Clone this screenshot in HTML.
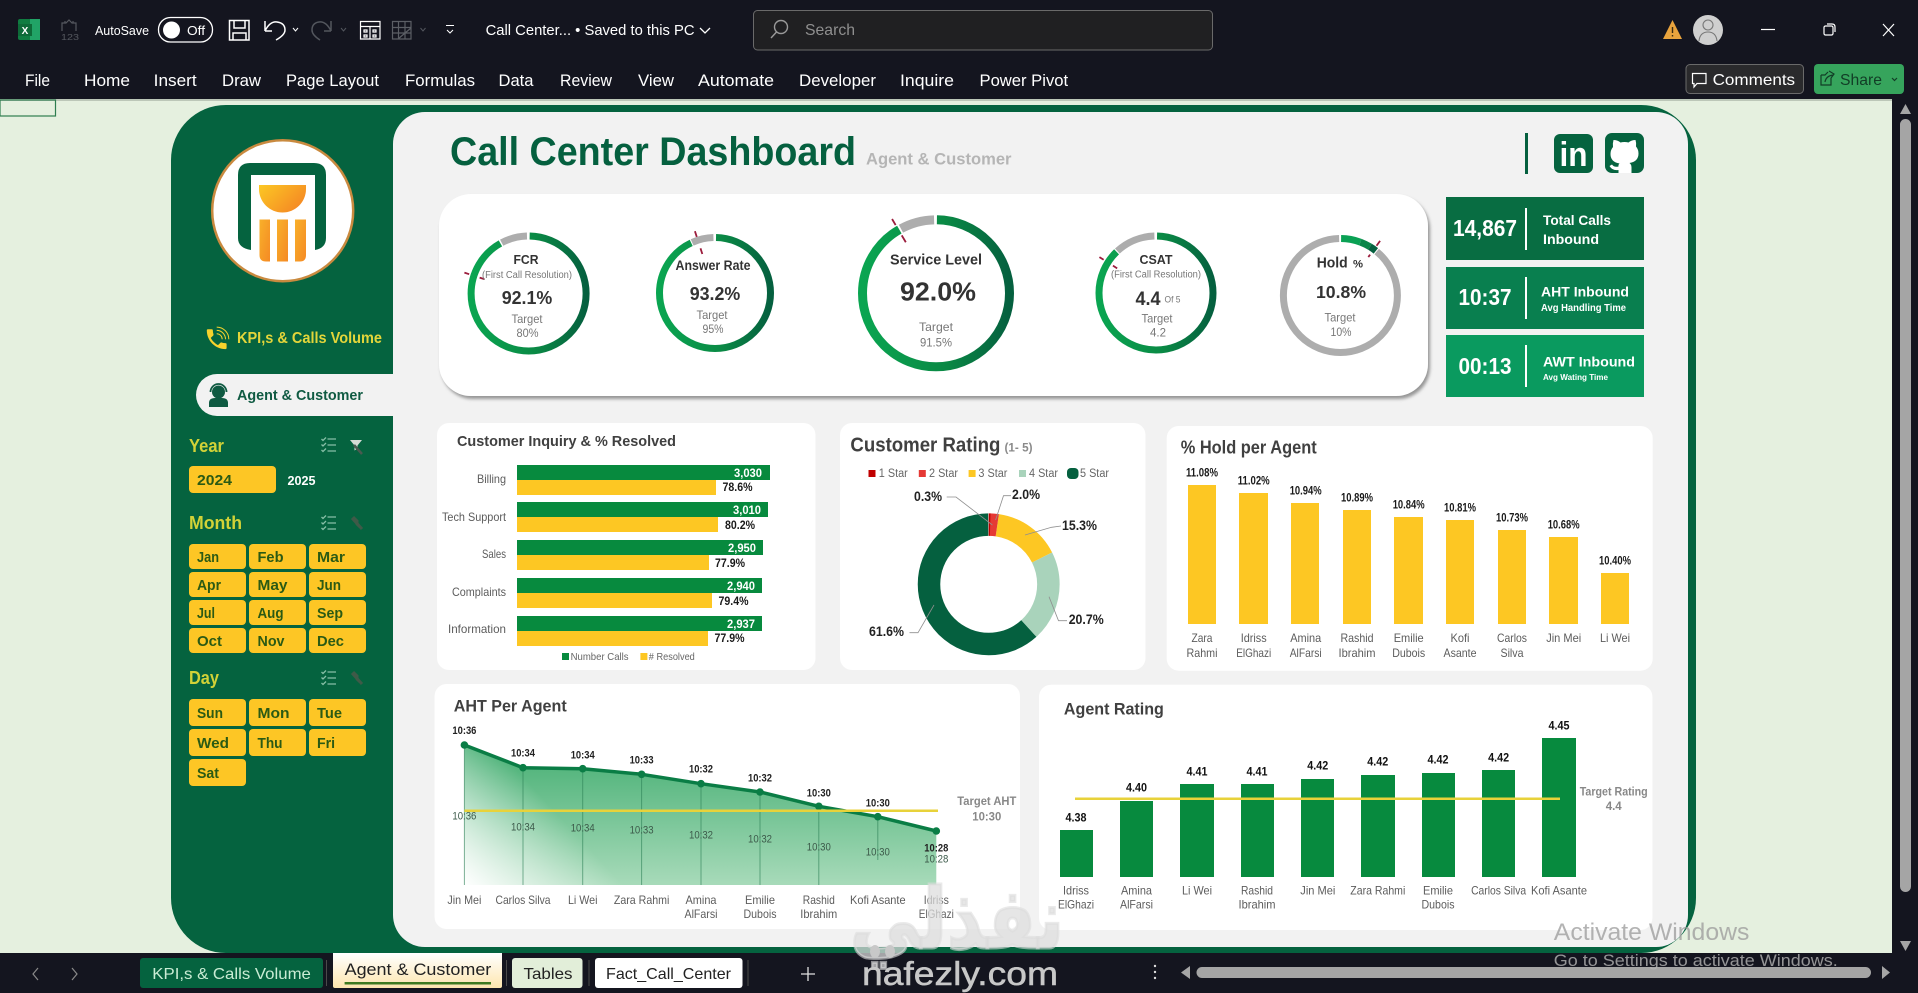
<!DOCTYPE html>
<html lang="en"><head><meta charset="utf-8"><title>Call Center Dashboard</title>
<style>
html,body{margin:0;padding:0;background:#14151f;width:1918px;height:993px;overflow:hidden}
svg{display:block;position:absolute;left:0;top:0}
text{font-family:"Liberation Sans",sans-serif}
.m{fill:#fff;font-size:16px}
.b{font-weight:700}
.ti{fill:#404040;font-weight:700}
.mb{font-weight:700;font-size:15px;fill:#2b5a14}
.sh{font-weight:700;font-size:18px;fill:#d2d237}
.dk{fill:#333;font-weight:700}
.gy{fill:#777;font-size:12px}
.w{fill:#fff;font-weight:700}
.c{fill:#5c5c5c;font-size:12px}
.v{fill:#1a1a1a;font-size:12px;font-weight:700}
.tc{fill:#888;font-size:12px;font-weight:700}
.l{fill:none;stroke:#8f8f8f;stroke-width:.8}
</style></head><body>
<svg width="1918" height="993" viewBox="0 0 1918 993" xmlns="http://www.w3.org/2000/svg">
<defs>
<linearGradient id="rg" x1="0" y1="0" x2="0" y2="1"><stop offset="0" stop-color="#0aa551"/><stop offset=".55" stop-color="#0a8a45"/><stop offset="1" stop-color="#05603f"/></linearGradient>
<linearGradient id="og" x1="0" y1="0" x2="1" y2=".6"><stop offset="0" stop-color="#fcc824"/><stop offset="1" stop-color="#f58a24"/></linearGradient>
<linearGradient id="ob" x1="0" y1="0" x2="1" y2="1"><stop offset="0" stop-color="#f8b02a"/><stop offset="1" stop-color="#f58a24"/></linearGradient>
<linearGradient id="ar" x1="0" y1="0" x2="0" y2="1"><stop offset="0" stop-color="#42ad70"/><stop offset="1" stop-color="#abdcbc"/></linearGradient>
<linearGradient id="aw" gradientUnits="userSpaceOnUse" x1="464" y1="885" x2="620" y2="740"><stop offset="0" stop-color="#fff" stop-opacity="1"/><stop offset=".55" stop-color="#fff" stop-opacity="0"/></linearGradient>
<linearGradient id="tb" x1="0" y1="0" x2="0" y2="1"><stop offset="0" stop-color="#fff"/><stop offset="1" stop-color="#fde6ae"/></linearGradient>
<filter id="sd" x="-3%" y="-5%" width="106%" height="112%"><feDropShadow dx="2" dy="3" stdDeviation="1.500" flood-color="#777" flood-opacity=".75"/></filter>
<clipPath id="area"><path d="M464.400 745L523 767.700 582.700 768.700 641.600 774.300 701 783.700 760 792 818.800 806.300 877.800 816.700 936.300 831V885H464.400Z"/></clipPath>
</defs>

<!-- sheet -->
<rect x="0" y="99" width="1892" height="854" fill="#e5f0df"/>
<rect x="0" y="99" width="1918" height="2" fill="#bcc7b8"/>
<rect x="0" y="100" width="55.500" height="16" fill="none" stroke="#2e7d4f" stroke-width="1.200"/>
<rect x="171" y="105" width="1525" height="848" rx="55" fill="#05633f"/>
<rect x="393" y="112" width="1295" height="835" rx="32" fill="#f2f2f2"/>

<!-- logo -->
<circle cx="282.700" cy="210.700" r="70.500" fill="#fff" stroke="#c98a3f" stroke-width="2.500"/>
<path d="M238 250V175Q238 163 250 163H314Q326 163 326 175V238Q326 248 315 250V175H251V250Q238 248 238 238Z" fill="#05633f"/>
<path d="M259 185H306V189A23.500 23.500 0 0 1 259 189Z" fill="url(#og)"/>
<path d="M259.500 219.500H270V261.500H266Q259.500 261.500 259.500 255Z" fill="url(#ob)"/>
<rect x="277" y="219.500" width="11" height="42" fill="url(#ob)"/>
<path d="M295 219.500H306V255Q306 261.500 300 261.500H295Z" fill="url(#ob)"/>

<!-- nav -->
<g transform="translate(203.500 326) scale(1.100)"><path d="M6.600 10.800c1.400 2.800 3.800 5.100 6.600 6.600l2.200-2.200c.3-.3.7-.4 1-.2 1.100.4 2.300.6 3.600.6.600 0 1 .4 1 1V20c0 .6-.4 1-1 1C10.600 21 3 13.400 3 4c0-.6.4-1 1-1h3.500c.6 0 1 .4 1 1 0 1.300.2 2.500.6 3.600.1.300 0 .7-.2 1z" fill="#f6d32d"/><path d="M12 7a5 5 0 0 1 5 5M12 4a8 8 0 0 1 8 8M12 1a11 11 0 0 1 11 11" fill="none" stroke="#f6d32d" stroke-width=".9"/></g>
<text x="237" y="343" class="b" font-size="15.500" fill="#e3d53a" textLength="145" lengthAdjust="spacingAndGlyphs">KPI,s &amp; Calls Volume</text>
<path d="M393 374H217A21 21 0 0 0 217 416H393Z" fill="#f2f2f2"/>
<g fill="#0f5a42"><circle cx="218.500" cy="392" r="6.500"/><path d="M209 407v-4q0-5 6-5h7q6 0 6 5v4q0 0-2 0h-15q-2 0-2 0z"/><path d="M210.500 392a8 8 0 0 1 16 0" fill="none" stroke="#0f5a42" stroke-width="1.800"/></g>
<text x="237" y="400" class="b" font-size="14.500" fill="#0f5a42" textLength="126" lengthAdjust="spacingAndGlyphs">Agent &amp; Customer</text>

<!-- slicers -->
<text x="189" y="452" class="sh" textLength="35" lengthAdjust="spacingAndGlyphs">Year</text>
<text x="189" y="529" class="sh" textLength="53" lengthAdjust="spacingAndGlyphs">Month</text>
<text x="189" y="684" class="sh" textLength="30" lengthAdjust="spacingAndGlyphs">Day</text>
<g fill="none" stroke="#86bfa6" stroke-width="1.300">
<path d="M321.500 439l1.500 1.500 3-3M321.500 444.500l1.500 1.500 3-3M321.500 450l1.500 1.500 3-3M327.500 439H336M327.500 445H336M327.500 451H336"/>
<path d="M321.500 517l1.500 1.500 3-3M321.500 522.500l1.500 1.500 3-3M321.500 528l1.500 1.500 3-3M327.500 517H336M327.500 523H336M327.500 529H336"/>
<path d="M321.500 672l1.500 1.500 3-3M321.500 677.500l1.500 1.500 3-3M321.500 683l1.500 1.500 3-3M327.500 672H336M327.500 678H336M327.500 684H336"/>
</g>
<path d="M350 440h12l-4.500 5.500v3l-3 2v-5Z" fill="#d5dcd6"/><path d="M354 445l8 9" stroke="#4a5a50" stroke-width="2.500"/>
<path d="M352 518l10 11M353 517l4 4v3l3 3" stroke="#3f5a48" stroke-width="3" fill="none"/>
<path d="M352 673l10 11M353 672l4 4v3l3 3" stroke="#3f5a48" stroke-width="3" fill="none"/>
<g fill="#fdc625">
<rect x="189" y="466" width="87" height="27" rx="4"/>
<rect x="189" y="544" width="57" height="25" rx="4"/><rect x="249" y="544" width="57" height="25" rx="4"/><rect x="309" y="544" width="57" height="25" rx="4"/>
<rect x="189" y="572" width="57" height="25" rx="4"/><rect x="249" y="572" width="57" height="25" rx="4"/><rect x="309" y="572" width="57" height="25" rx="4"/>
<rect x="189" y="600" width="57" height="25" rx="4"/><rect x="249" y="600" width="57" height="25" rx="4"/><rect x="309" y="600" width="57" height="25" rx="4"/>
<rect x="189" y="628" width="57" height="25" rx="4"/><rect x="249" y="628" width="57" height="25" rx="4"/><rect x="309" y="628" width="57" height="25" rx="4"/>
<rect x="189" y="699" width="57" height="27" rx="4"/><rect x="249" y="699" width="57" height="27" rx="4"/><rect x="309" y="699" width="57" height="27" rx="4"/>
<rect x="189" y="729" width="57" height="27" rx="4"/><rect x="249" y="729" width="57" height="27" rx="4"/><rect x="309" y="729" width="57" height="27" rx="4"/>
<rect x="189" y="759" width="57" height="27" rx="4"/>
</g>
<text x="197" y="485" class="mb" textLength="35" lengthAdjust="spacingAndGlyphs">2024</text>
<text x="287.500" y="485" class="b" font-size="13" fill="#fff" textLength="28" lengthAdjust="spacingAndGlyphs">2025</text>
<g>
<text x="197" y="562" class="mb" textLength="22" lengthAdjust="spacingAndGlyphs">Jan</text><text x="257.500" y="562" class="mb" textLength="26" lengthAdjust="spacingAndGlyphs">Feb</text><text x="317" y="562" class="mb" textLength="28" lengthAdjust="spacingAndGlyphs">Mar</text>
<text x="197" y="590" class="mb" textLength="24" lengthAdjust="spacingAndGlyphs">Apr</text><text x="257.500" y="590" class="mb" textLength="30" lengthAdjust="spacingAndGlyphs">May</text><text x="317" y="590" class="mb" textLength="24" lengthAdjust="spacingAndGlyphs">Jun</text>
<text x="197" y="618" class="mb" textLength="18" lengthAdjust="spacingAndGlyphs">Jul</text><text x="257.500" y="618" class="mb" textLength="26" lengthAdjust="spacingAndGlyphs">Aug</text><text x="317" y="618" class="mb" textLength="26" lengthAdjust="spacingAndGlyphs">Sep</text>
<text x="197" y="646" class="mb" textLength="25" lengthAdjust="spacingAndGlyphs">Oct</text><text x="257.500" y="646" class="mb" textLength="27" lengthAdjust="spacingAndGlyphs">Nov</text><text x="317" y="646" class="mb" textLength="27" lengthAdjust="spacingAndGlyphs">Dec</text>
<text x="197" y="718" class="mb" textLength="26" lengthAdjust="spacingAndGlyphs">Sun</text><text x="257.500" y="718" class="mb" textLength="32" lengthAdjust="spacingAndGlyphs">Mon</text><text x="317" y="718" class="mb" textLength="25" lengthAdjust="spacingAndGlyphs">Tue</text>
<text x="197" y="748" class="mb" textLength="32" lengthAdjust="spacingAndGlyphs">Wed</text><text x="257.500" y="748" class="mb" textLength="25" lengthAdjust="spacingAndGlyphs">Thu</text><text x="317" y="748" class="mb" textLength="18" lengthAdjust="spacingAndGlyphs">Fri</text>
<text x="197" y="778" class="mb" textLength="22" lengthAdjust="spacingAndGlyphs">Sat</text>
</g>

<!-- title -->
<text x="450" y="165" class="b" font-size="40" fill="#05603f" textLength="406" lengthAdjust="spacingAndGlyphs">Call Center Dashboard</text>
<text x="866" y="164.500" class="b" font-size="16.500" fill="#b5b5b5" textLength="145.500" lengthAdjust="spacingAndGlyphs">Agent &amp; Customer</text>
<rect x="1525" y="133" width="3" height="41" fill="#05603f"/>
<rect x="1554" y="134" width="39" height="39" rx="6" fill="#05633f"/>
<text x="1573.500" y="166" text-anchor="middle" class="b" font-size="34" fill="#fff" textLength="28" lengthAdjust="spacingAndGlyphs">in</text>
<rect x="1605" y="133" width="39" height="40" rx="7" fill="#05633f"/>
<path d="M1613.500 140q4 0 7 2.500q4-1 8 0q3-2.500 7-2.500q1 3 .5 6.500q2.500 3 2.500 7q0 8-9 9.500q2 1.500 2 4.500v5.500h-13v-3q-6 1-9-4l2.500-1.500q2 3 6.500 2q-.3-2 1-3q-9-1.500-9-9.500q0-4 2.500-7q-.5-3.500 .5-7z" fill="#fff"/>

<!-- KPI panel -->
<rect x="439" y="194" width="989" height="202" rx="32" fill="#fff" filter="url(#sd)"/>
<g fill="none">
<g stroke-width="7">
<circle cx="528.600" cy="293.500" r="57.500" pathLength="100" stroke="url(#rg)" stroke-dasharray="91.600 100" stroke-dashoffset="-.3" transform="rotate(-90 528.600 293.500)"/>
<circle cx="528.600" cy="293.500" r="57.500" pathLength="100" stroke="#adadad" stroke-dasharray="7.300 100" stroke-dashoffset="-92.300" transform="rotate(-90 528.600 293.500)"/>
<circle cx="715" cy="293" r="55.500" pathLength="100" stroke="url(#rg)" stroke-dasharray="92.700 100" stroke-dashoffset="-.3" transform="rotate(-90 715 293)"/>
<circle cx="715" cy="293" r="55.500" pathLength="100" stroke="#adadad" stroke-dasharray="6.300 100" stroke-dashoffset="-93.300" transform="rotate(-90 715 293)"/>
<circle cx="1156" cy="293" r="57" pathLength="100" stroke="url(#rg)" stroke-dasharray="87.600 100" stroke-dashoffset="-.3" transform="rotate(-90 1156 293)"/>
<circle cx="1156" cy="293" r="57" pathLength="100" stroke="#adadad" stroke-dasharray="11.400 100" stroke-dashoffset="-88.200" transform="rotate(-90 1156 293)"/>
<circle cx="1340.400" cy="295.500" r="57" pathLength="100" stroke="#adadad" stroke-dasharray="88.700 100" stroke-dashoffset="-11" transform="rotate(-90 1340.400 295.500)"/>
<circle cx="1340.400" cy="295.500" r="57" pathLength="100" stroke="#0aa154" stroke-dasharray="5.500 100" stroke-dashoffset="-.2" transform="rotate(-90 1340.400 295.500)"/>
<circle cx="1340.400" cy="295.500" r="57" pathLength="100" stroke="#0a8549" stroke-dasharray="3 100" stroke-dashoffset="-5.700" transform="rotate(-90 1340.400 295.500)"/>
<circle cx="1340.400" cy="295.500" r="57" pathLength="100" stroke="#06603f" stroke-dasharray="2 100" stroke-dashoffset="-8.700" transform="rotate(-90 1340.400 295.500)"/>
</g>
<g stroke-width="9">
<circle cx="936" cy="293.300" r="73.500" pathLength="100" stroke="url(#rg)" stroke-dasharray="91.600 100" stroke-dashoffset="-.2" transform="rotate(-90 936 293.300)"/>
<circle cx="936" cy="293.300" r="73.500" pathLength="100" stroke="#adadad" stroke-dasharray="7.500 100" stroke-dashoffset="-92.200" transform="rotate(-90 936 293.300)"/>
</g>
<g stroke="#9b1c3c" stroke-width="1.800">
<path transform="rotate(-72 528.600 293.500)" d="M528.600 226v5M528.600 242v5"/>
<path transform="rotate(-18 715 293)" d="M715 228v6M715 246v6"/>
<path transform="rotate(-30.600 936 293.300)" d="M936 207v7M936 226v8"/>
<path transform="rotate(-57.600 1156 293)" d="M1156 226v5M1156 242v5"/>
<path transform="rotate(36 1340.400 295.500)" d="M1340.400 228v6M1340.400 245v3"/>
</g>
</g>
<text x="526" y="264" text-anchor="middle" class="dk" font-size="13" textLength="25" lengthAdjust="spacingAndGlyphs">FCR</text>
<text x="527" y="278" text-anchor="middle" fill="#777" font-size="10" textLength="90" lengthAdjust="spacingAndGlyphs">(First Call Resolution)</text>
<text x="527" y="304" text-anchor="middle" class="dk" font-size="18" textLength="50.600" lengthAdjust="spacingAndGlyphs">92.1%</text>
<text x="527" y="323" text-anchor="middle" class="gy" textLength="31" lengthAdjust="spacingAndGlyphs">Target</text>
<text x="527.500" y="337" text-anchor="middle" class="gy" textLength="22" lengthAdjust="spacingAndGlyphs">80%</text>

<text x="713" y="270" text-anchor="middle" class="dk" font-size="13.500" textLength="75" lengthAdjust="spacingAndGlyphs">Answer Rate</text>
<text x="715" y="300" text-anchor="middle" class="dk" font-size="18" textLength="50.600" lengthAdjust="spacingAndGlyphs">93.2%</text>
<text x="712" y="319" text-anchor="middle" class="gy" textLength="31" lengthAdjust="spacingAndGlyphs">Target</text>
<text x="713" y="333" text-anchor="middle" class="gy" textLength="21" lengthAdjust="spacingAndGlyphs">95%</text>

<text x="936" y="264.700" text-anchor="middle" class="dk" font-size="15" textLength="92" lengthAdjust="spacingAndGlyphs">Service Level</text>
<text x="938" y="300.700" text-anchor="middle" class="dk" font-size="26" textLength="76" lengthAdjust="spacingAndGlyphs">92.0%</text>
<text x="936" y="331" text-anchor="middle" class="gy" textLength="34" lengthAdjust="spacingAndGlyphs">Target</text>
<text x="936" y="346.700" text-anchor="middle" class="gy" textLength="32" lengthAdjust="spacingAndGlyphs">91.5%</text>

<text x="1156" y="264" text-anchor="middle" class="dk" font-size="13" textLength="33" lengthAdjust="spacingAndGlyphs">CSAT</text>
<text x="1156" y="277.700" text-anchor="middle" fill="#777" font-size="10" textLength="90" lengthAdjust="spacingAndGlyphs">(First Call Resolution)</text>
<text x="1148" y="305" text-anchor="middle" class="dk" font-size="19" textLength="25" lengthAdjust="spacingAndGlyphs">4.4</text>
<text x="1164.500" y="302.700" fill="#777" font-size="9" textLength="16" lengthAdjust="spacingAndGlyphs">Of 5</text>
<text x="1157" y="322.700" text-anchor="middle" class="gy" textLength="31" lengthAdjust="spacingAndGlyphs">Target</text>
<text x="1158" y="336.700" text-anchor="middle" class="gy" textLength="16" lengthAdjust="spacingAndGlyphs">4.2</text>

<text x="1316.700" y="267.300" class="dk" font-size="14.500" textLength="31" lengthAdjust="spacingAndGlyphs">Hold</text>
<text x="1353" y="267.300" class="dk" font-size="11" textLength="10" lengthAdjust="spacingAndGlyphs">%</text>
<text x="1341" y="298" text-anchor="middle" class="dk" font-size="17.500" textLength="50" lengthAdjust="spacingAndGlyphs">10.8%</text>
<text x="1340" y="321.700" text-anchor="middle" class="gy" textLength="31" lengthAdjust="spacingAndGlyphs">Target</text>
<text x="1341" y="336" text-anchor="middle" class="gy" textLength="21" lengthAdjust="spacingAndGlyphs">10%</text>

<!-- KPI cards -->
<rect x="1446" y="197" width="198" height="63" fill="#086d42"/>
<rect x="1446" y="267" width="198" height="62" fill="#097f4f"/>
<rect x="1446" y="335" width="198" height="62" fill="#0a9a5f"/>
<g fill="#fff"><rect x="1525" y="208" width="2" height="42"/><rect x="1525" y="277" width="2" height="42"/><rect x="1525" y="345" width="2" height="42"/></g>
<text x="1485" y="236" text-anchor="middle" class="w" font-size="23" textLength="64" lengthAdjust="spacingAndGlyphs">14,867</text>
<text x="1485" y="305" text-anchor="middle" class="w" font-size="23" textLength="53" lengthAdjust="spacingAndGlyphs">10:37</text>
<text x="1485" y="374" text-anchor="middle" class="w" font-size="23" textLength="53" lengthAdjust="spacingAndGlyphs">00:13</text>
<text x="1543" y="225" class="w" font-size="14" textLength="68" lengthAdjust="spacingAndGlyphs">Total Calls</text>
<text x="1543" y="244" class="w" font-size="14" textLength="56" lengthAdjust="spacingAndGlyphs">Inbound</text>
<text x="1541" y="296.700" class="w" font-size="14" textLength="88" lengthAdjust="spacingAndGlyphs">AHT Inbound</text>
<text x="1541" y="311" class="w" font-size="10" textLength="85" lengthAdjust="spacingAndGlyphs">Avg Handling Time</text>
<text x="1543" y="366.700" class="w" font-size="14" textLength="92" lengthAdjust="spacingAndGlyphs">AWT Inbound</text>
<text x="1543" y="380" class="w" font-size="8.500" textLength="65" lengthAdjust="spacingAndGlyphs">Avg Wating Time</text>

<!-- Inquiry card -->
<rect x="437" y="423" width="378.500" height="247" rx="12" fill="#fff"/>
<text x="457" y="446" class="ti" font-size="15" textLength="219" lengthAdjust="spacingAndGlyphs">Customer Inquiry &amp; % Resolved</text>
<g fill="#078a3e">
<rect x="517" y="465" width="253" height="15"/><rect x="517" y="502" width="251" height="15"/><rect x="517" y="540" width="246" height="15"/><rect x="517" y="578" width="245" height="15"/><rect x="517" y="616" width="245" height="15"/>
</g>
<g fill="#fdc723">
<rect x="517" y="480" width="199" height="15"/><rect x="517" y="517" width="201" height="15"/><rect x="517" y="555" width="192" height="15"/><rect x="517" y="593" width="195" height="15"/><rect x="517" y="631" width="191" height="15"/>
</g>
<g text-anchor="end">
<text x="506" y="483" class="c" textLength="29" lengthAdjust="spacingAndGlyphs">Billing</text>
<text x="506" y="521" class="c" textLength="64" lengthAdjust="spacingAndGlyphs">Tech Support</text>
<text x="506" y="558" class="c" textLength="24" lengthAdjust="spacingAndGlyphs">Sales</text>
<text x="506" y="596" class="c" textLength="54" lengthAdjust="spacingAndGlyphs">Complaints</text>
<text x="506" y="633" class="c" textLength="58" lengthAdjust="spacingAndGlyphs">Information</text>
</g>
<g font-size="12">
<text x="762" y="477" text-anchor="end" class="w" textLength="28" lengthAdjust="spacingAndGlyphs">3,030</text>
<text x="761" y="514" text-anchor="end" class="w" textLength="28" lengthAdjust="spacingAndGlyphs">3,010</text>
<text x="756" y="552" text-anchor="end" class="w" textLength="28" lengthAdjust="spacingAndGlyphs">2,950</text>
<text x="755" y="590" text-anchor="end" class="w" textLength="28" lengthAdjust="spacingAndGlyphs">2,940</text>
<text x="755" y="628" text-anchor="end" class="w" textLength="28" lengthAdjust="spacingAndGlyphs">2,937</text>
</g>
<text x="722.500" y="491" class="v" textLength="30" lengthAdjust="spacingAndGlyphs">78.6%</text>
<text x="725" y="529" class="v" textLength="30" lengthAdjust="spacingAndGlyphs">80.2%</text>
<text x="715" y="567" class="v" textLength="30" lengthAdjust="spacingAndGlyphs">77.9%</text>
<text x="718.500" y="605" class="v" textLength="30" lengthAdjust="spacingAndGlyphs">79.4%</text>
<text x="714.500" y="642" class="v" textLength="30" lengthAdjust="spacingAndGlyphs">77.9%</text>
<rect x="562" y="653" width="7" height="7" fill="#078a3e"/><text x="570.600" y="660" fill="#666" font-size="10.500" textLength="58" lengthAdjust="spacingAndGlyphs">Number Calls</text>
<rect x="640.400" y="653" width="7" height="7" fill="#fdc723"/><text x="648.800" y="660" fill="#666" font-size="10.500" textLength="46" lengthAdjust="spacingAndGlyphs"># Resolved</text>

<!-- Customer rating -->
<rect x="840" y="423" width="305.500" height="247" rx="12" fill="#fff"/>
<text x="850.400" y="451.700" class="ti" font-size="20" textLength="150" lengthAdjust="spacingAndGlyphs">Customer Rating</text>
<text x="1004.500" y="451.700" class="b" fill="#8a8a8a" font-size="11.500" textLength="28" lengthAdjust="spacingAndGlyphs">(1- 5)</text>
<rect x="868.500" y="470" width="7" height="7" fill="#c00000"/><text x="878.800" y="477" fill="#666" font-size="11.500" textLength="29" lengthAdjust="spacingAndGlyphs">1 Star</text>
<rect x="918.800" y="470" width="7" height="7" fill="#e53935"/><text x="929" y="477" fill="#666" font-size="11.500" textLength="29" lengthAdjust="spacingAndGlyphs">2 Star</text>
<rect x="968.600" y="470" width="7" height="7" fill="#fdc723"/><text x="978.400" y="477" fill="#666" font-size="11.500" textLength="29" lengthAdjust="spacingAndGlyphs">3 Star</text>
<rect x="1019" y="470" width="7" height="7" fill="#a9d3bb"/><text x="1029" y="477" fill="#666" font-size="11.500" textLength="29" lengthAdjust="spacingAndGlyphs">4 Star</text>
<rect x="1067" y="468" width="11.500" height="11" rx="4" fill="#05603f"/><text x="1080" y="477" fill="#666" font-size="11.500" textLength="29" lengthAdjust="spacingAndGlyphs">5 Star</text>
<g fill="none" stroke-width="22.500" transform="rotate(-90 988.700 584.300)">
<circle cx="988.700" cy="584.300" r="59.700" pathLength="100" stroke="#05603f" stroke-dasharray="61.700 100" stroke-dashoffset="-38.300"/>
<circle cx="988.700" cy="584.300" r="59.700" pathLength="100" stroke="#a9d3bb" stroke-dasharray="20.700 100" stroke-dashoffset="-17.600"/>
<circle cx="988.700" cy="584.300" r="59.700" pathLength="100" stroke="#fdc723" stroke-dasharray="15.300 100" stroke-dashoffset="-2.300"/>
<circle cx="988.700" cy="584.300" r="59.700" pathLength="100" stroke="#e53935" stroke-dasharray="2 100" stroke-dashoffset="-.3"/>
<circle cx="988.700" cy="584.300" r="59.700" pathLength="100" stroke="#c00000" stroke-dasharray=".4 100"/>
</g>
<path class="l" d="M946.700 497H956L992.400 525M1011 495.700H1003.500L995.600 520M1061 526L1051.500 527.300 1025 535M1067 620.700H1058.500L1049 596.700M909.500 632.700H918L934 605"/>
<text x="914" y="501" fill="#222" font-size="13.500" font-weight="700" textLength="28" lengthAdjust="spacingAndGlyphs">0.3%</text>
<text x="1012" y="499" fill="#222" font-size="13.500" font-weight="700" textLength="28" lengthAdjust="spacingAndGlyphs">2.0%</text>
<text x="1062" y="530" fill="#222" font-size="13.500" font-weight="700" textLength="35" lengthAdjust="spacingAndGlyphs">15.3%</text>
<text x="1068.700" y="624" fill="#222" font-size="13.500" font-weight="700" textLength="35" lengthAdjust="spacingAndGlyphs">20.7%</text>
<text x="869" y="636" fill="#222" font-size="13.500" font-weight="700" textLength="35" lengthAdjust="spacingAndGlyphs">61.6%</text>

<!-- Hold per agent -->
<rect x="1166.700" y="426" width="486" height="244.700" rx="12" fill="#fff"/>
<text x="1180.700" y="453.300" class="ti" font-size="18" textLength="136" lengthAdjust="spacingAndGlyphs">% Hold per Agent</text>
<g fill="#fdc723">
<rect x="1188" y="485" width="28" height="139"/><rect x="1239" y="493" width="29" height="131"/><rect x="1291" y="503" width="28" height="121"/><rect x="1343" y="510" width="28" height="114"/><rect x="1394" y="517" width="29" height="107"/><rect x="1446" y="520" width="28" height="104"/><rect x="1498" y="530" width="28" height="94"/><rect x="1549" y="537" width="29" height="87"/><rect x="1601" y="573" width="28" height="51"/>
</g>
<g text-anchor="middle">
<text x="1202" y="476.700" class="v" textLength="32" lengthAdjust="spacingAndGlyphs">11.08%</text>
<text x="1253.700" y="484.300" class="v" textLength="32" lengthAdjust="spacingAndGlyphs">11.02%</text>
<text x="1305.700" y="494.700" class="v" textLength="32" lengthAdjust="spacingAndGlyphs">10.94%</text>
<text x="1357" y="501.700" class="v" textLength="32" lengthAdjust="spacingAndGlyphs">10.89%</text>
<text x="1408.700" y="508.700" class="v" textLength="32" lengthAdjust="spacingAndGlyphs">10.84%</text>
<text x="1460" y="511.700" class="v" textLength="32" lengthAdjust="spacingAndGlyphs">10.81%</text>
<text x="1512" y="521.700" class="v" textLength="32" lengthAdjust="spacingAndGlyphs">10.73%</text>
<text x="1563.700" y="528.700" class="v" textLength="32" lengthAdjust="spacingAndGlyphs">10.68%</text>
<text x="1615" y="564.700" class="v" textLength="32" lengthAdjust="spacingAndGlyphs">10.40%</text>
<text x="1202" y="642" class="c" textLength="21" lengthAdjust="spacingAndGlyphs">Zara</text><text x="1202" y="657" class="c" textLength="31" lengthAdjust="spacingAndGlyphs">Rahmi</text>
<text x="1253.700" y="642" class="c" textLength="26" lengthAdjust="spacingAndGlyphs">Idriss</text><text x="1253.700" y="657" class="c" textLength="35" lengthAdjust="spacingAndGlyphs">ElGhazi</text>
<text x="1305.700" y="642" class="c" textLength="31" lengthAdjust="spacingAndGlyphs">Amina</text><text x="1305.700" y="657" class="c" textLength="32" lengthAdjust="spacingAndGlyphs">AlFarsi</text>
<text x="1357" y="642" class="c" textLength="33" lengthAdjust="spacingAndGlyphs">Rashid</text><text x="1357" y="657" class="c" textLength="37" lengthAdjust="spacingAndGlyphs">Ibrahim</text>
<text x="1408.700" y="642" class="c" textLength="30" lengthAdjust="spacingAndGlyphs">Emilie</text><text x="1408.700" y="657" class="c" textLength="33" lengthAdjust="spacingAndGlyphs">Dubois</text>
<text x="1460" y="642" class="c" textLength="19" lengthAdjust="spacingAndGlyphs">Kofi</text><text x="1460" y="657" class="c" textLength="33" lengthAdjust="spacingAndGlyphs">Asante</text>
<text x="1512" y="642" class="c" textLength="30" lengthAdjust="spacingAndGlyphs">Carlos</text><text x="1512" y="657" class="c" textLength="23" lengthAdjust="spacingAndGlyphs">Silva</text>
<text x="1563.700" y="642" class="c" textLength="35" lengthAdjust="spacingAndGlyphs">Jin Mei</text>
<text x="1615" y="642" class="c" textLength="30" lengthAdjust="spacingAndGlyphs">Li Wei</text>
</g>

<!-- AHT card -->
<rect x="434.600" y="684" width="585.400" height="245" rx="12" fill="#fff"/>
<text x="453.700" y="711.700" class="ti" font-size="17" textLength="113" lengthAdjust="spacingAndGlyphs">AHT Per Agent</text>
<g clip-path="url(#area)"><rect x="460" y="740" width="480" height="150" fill="url(#ar)"/><rect x="460" y="740" width="480" height="150" fill="url(#aw)"/></g>
<path d="M464.400 745V885M523 767.700V885M582.700 768.700V885M641.600 774.300V885M701 783.700V885M760 792V885M818.800 806.300V885M877.800 816.700V860" stroke="#2c7f55" stroke-width="1" opacity=".6" fill="none"/>
<path d="M464.400 745L523 767.700 582.700 768.700 641.600 774.300 701 783.700 760 792 818.800 806.300 877.800 816.700 936.300 831" fill="none" stroke="#0a7d45" stroke-width="3.500" stroke-linejoin="round"/>
<g fill="#0a7d45"><circle cx="464.400" cy="745" r="3.800"/><circle cx="523" cy="767.700" r="3.800"/><circle cx="582.700" cy="768.700" r="3.800"/><circle cx="641.600" cy="774.300" r="3.800"/><circle cx="701" cy="783.700" r="3.800"/><circle cx="760" cy="792" r="3.800"/><circle cx="818.800" cy="806.300" r="3.800"/><circle cx="877.800" cy="816.700" r="3.800"/><circle cx="936.300" cy="831" r="3.800"/></g>
<path d="M464.400 810.700H938" stroke="#e8d23a" stroke-width="2.500"/>
<g text-anchor="middle" font-size="11" fill="#222" font-weight="700">
<text x="464.400" y="734" textLength="24" lengthAdjust="spacingAndGlyphs">10:36</text><text x="523" y="756.500" textLength="24" lengthAdjust="spacingAndGlyphs">10:34</text><text x="582.700" y="758.300" textLength="24" lengthAdjust="spacingAndGlyphs">10:34</text><text x="641.600" y="763.300" textLength="24" lengthAdjust="spacingAndGlyphs">10:33</text><text x="701" y="772.300" textLength="24" lengthAdjust="spacingAndGlyphs">10:32</text><text x="760" y="781.300" textLength="24" lengthAdjust="spacingAndGlyphs">10:32</text><text x="818.800" y="796.300" textLength="24" lengthAdjust="spacingAndGlyphs">10:30</text><text x="877.800" y="806.300" textLength="24" lengthAdjust="spacingAndGlyphs">10:30</text><text x="936.300" y="851.500" textLength="24" lengthAdjust="spacingAndGlyphs">10:28</text>
</g>
<g text-anchor="middle" font-size="11" fill="#3c5a4a">
<text x="464.400" y="819.500" textLength="24" lengthAdjust="spacingAndGlyphs">10:36</text><text x="523" y="830.500" textLength="24" lengthAdjust="spacingAndGlyphs">10:34</text><text x="582.700" y="831.500" textLength="24" lengthAdjust="spacingAndGlyphs">10:34</text><text x="641.600" y="833.500" textLength="24" lengthAdjust="spacingAndGlyphs">10:33</text><text x="701" y="838.500" textLength="24" lengthAdjust="spacingAndGlyphs">10:32</text><text x="760" y="842.500" textLength="24" lengthAdjust="spacingAndGlyphs">10:32</text><text x="818.800" y="850.500" textLength="24" lengthAdjust="spacingAndGlyphs">10:30</text><text x="877.800" y="855.500" textLength="24" lengthAdjust="spacingAndGlyphs">10:30</text><text x="936.300" y="862.500" textLength="24" lengthAdjust="spacingAndGlyphs">10:28</text>
</g>
<text x="986.800" y="805" text-anchor="middle" class="tc" textLength="59" lengthAdjust="spacingAndGlyphs">Target AHT</text>
<text x="986.800" y="820.700" text-anchor="middle" class="tc" textLength="29" lengthAdjust="spacingAndGlyphs">10:30</text>
<g text-anchor="middle">
<text x="464.400" y="904" class="c" textLength="34" lengthAdjust="spacingAndGlyphs">Jin Mei</text>
<text x="523" y="904" class="c" textLength="55" lengthAdjust="spacingAndGlyphs">Carlos Silva</text>
<text x="582.700" y="904" class="c" textLength="29.500" lengthAdjust="spacingAndGlyphs">Li Wei</text>
<text x="641.600" y="904" class="c" textLength="55.500" lengthAdjust="spacingAndGlyphs">Zara Rahmi</text>
<text x="701" y="904" class="c" textLength="31" lengthAdjust="spacingAndGlyphs">Amina</text><text x="701" y="918" class="c" textLength="33" lengthAdjust="spacingAndGlyphs">AlFarsi</text>
<text x="760" y="904" class="c" textLength="30" lengthAdjust="spacingAndGlyphs">Emilie</text><text x="760" y="918" class="c" textLength="33" lengthAdjust="spacingAndGlyphs">Dubois</text>
<text x="818.800" y="904" class="c" textLength="32" lengthAdjust="spacingAndGlyphs">Rashid</text><text x="818.800" y="918" class="c" textLength="37" lengthAdjust="spacingAndGlyphs">Ibrahim</text>
<text x="877.800" y="904" class="c" textLength="55.500" lengthAdjust="spacingAndGlyphs">Kofi Asante</text>
<text x="936.300" y="904" class="c" textLength="25" lengthAdjust="spacingAndGlyphs">Idriss</text><text x="936.300" y="918" class="c" textLength="35" lengthAdjust="spacingAndGlyphs">ElGhazi</text>
</g>

<!-- Agent rating -->
<rect x="1039" y="684.700" width="613.400" height="245.300" rx="12" fill="#fff"/>
<text x="1063.900" y="714.300" class="ti" font-size="17" textLength="100" lengthAdjust="spacingAndGlyphs">Agent Rating</text>
<g fill="#078a3e">
<rect x="1060" y="830" width="33" height="47"/><rect x="1120" y="801" width="33" height="76"/><rect x="1180" y="784" width="34" height="93"/><rect x="1241" y="784" width="33" height="93"/><rect x="1301" y="779" width="33" height="98"/><rect x="1361" y="775" width="34" height="102"/><rect x="1422" y="773" width="33" height="104"/><rect x="1482" y="770" width="33" height="107"/><rect x="1542" y="738" width="34" height="139"/>
</g>
<path d="M1075 798.700H1560" stroke="#e8d23a" stroke-width="2.500"/>
<g text-anchor="middle" font-size="12" fill="#111" font-weight="700">
<text x="1076" y="821.300" textLength="21" lengthAdjust="spacingAndGlyphs">4.38</text><text x="1136.500" y="791.300" textLength="21" lengthAdjust="spacingAndGlyphs">4.40</text><text x="1197" y="775.300" textLength="21" lengthAdjust="spacingAndGlyphs">4.41</text><text x="1257" y="775.300" textLength="21" lengthAdjust="spacingAndGlyphs">4.41</text><text x="1317.800" y="769.300" textLength="21" lengthAdjust="spacingAndGlyphs">4.42</text><text x="1377.800" y="765.300" textLength="21" lengthAdjust="spacingAndGlyphs">4.42</text><text x="1438" y="763.300" textLength="21" lengthAdjust="spacingAndGlyphs">4.42</text><text x="1498.600" y="761.300" textLength="21" lengthAdjust="spacingAndGlyphs">4.42</text><text x="1559" y="729.300" textLength="21" lengthAdjust="spacingAndGlyphs">4.45</text>
</g>
<text x="1613.700" y="795.700" text-anchor="middle" class="tc" textLength="68" lengthAdjust="spacingAndGlyphs">Target Rating</text>
<text x="1613.700" y="810" text-anchor="middle" class="tc" textLength="16" lengthAdjust="spacingAndGlyphs">4.4</text>
<g text-anchor="middle">
<text x="1076" y="894.300" class="c" textLength="26" lengthAdjust="spacingAndGlyphs">Idriss</text><text x="1076" y="908.300" class="c" textLength="36" lengthAdjust="spacingAndGlyphs">ElGhazi</text>
<text x="1136.500" y="894.300" class="c" textLength="31" lengthAdjust="spacingAndGlyphs">Amina</text><text x="1136.500" y="908.300" class="c" textLength="33" lengthAdjust="spacingAndGlyphs">AlFarsi</text>
<text x="1197" y="894.300" class="c" textLength="30" lengthAdjust="spacingAndGlyphs">Li Wei</text>
<text x="1257" y="894.300" class="c" textLength="32" lengthAdjust="spacingAndGlyphs">Rashid</text><text x="1257" y="908.300" class="c" textLength="37" lengthAdjust="spacingAndGlyphs">Ibrahim</text>
<text x="1317.800" y="894.300" class="c" textLength="35" lengthAdjust="spacingAndGlyphs">Jin Mei</text>
<text x="1377.800" y="894.300" class="c" textLength="55" lengthAdjust="spacingAndGlyphs">Zara Rahmi</text>
<text x="1438" y="894.300" class="c" textLength="30" lengthAdjust="spacingAndGlyphs">Emilie</text><text x="1438" y="908.300" class="c" textLength="33" lengthAdjust="spacingAndGlyphs">Dubois</text>
<text x="1498.600" y="894.300" class="c" textLength="55" lengthAdjust="spacingAndGlyphs">Carlos Silva</text>
<text x="1559" y="894.300" class="c" textLength="56" lengthAdjust="spacingAndGlyphs">Kofi Asante</text>
</g>

<!-- header -->
<rect x="0" y="0" width="1918" height="99" fill="#14151f"/>
<rect x="18" y="19" width="22" height="21" rx="2" fill="#107c41"/><rect x="30" y="19" width="10" height="21" fill="#21a366"/>
<rect x="18" y="24" width="14" height="12" fill="#0e6a38"/><text x="25" y="34" text-anchor="middle" class="w" font-size="10">X</text>
<g fill="none" stroke="#55585f" stroke-width="1.200"><path d="M62 31V23h4l3-3 3 3h4v8"/><path d="M65 23v-2M73 23v-2"/></g>
<text x="61" y="40" fill="#55585f" font-size="8.500" textLength="18" lengthAdjust="spacingAndGlyphs">123</text>
<text x="95" y="35" class="m" style="font-size:13px" textLength="54" lengthAdjust="spacingAndGlyphs">AutoSave</text>
<rect x="158.500" y="17.500" width="54" height="24.500" rx="12" fill="none" stroke="#fff" stroke-width="1.300"/>
<circle cx="171.500" cy="30" r="8.500" fill="#fff"/>
<text x="187" y="35" class="m" style="font-size:13px" textLength="18" lengthAdjust="spacingAndGlyphs">Off</text>
<g fill="none" stroke="#fff" stroke-width="1.500">
<path d="M229.500 20.500H249V40H229.500ZM234 20.500V28H245V20.500M233 40V33H246V40"/>
<path d="M265 21V31M265 31H272M265 31Q270 21 277 22Q285 23 285 30Q285 35 276 40"/>
<path d="M293 28l2.500 3 2.500-3" stroke-width="1"/>
<path d="M331 21V31M331 31H324M331 31Q326 21 319 22Q312 23 312 30Q312 35 320 40" stroke="#53565d"/>
<path d="M341 28l2.500 3 2.500-3" stroke="#53565d" stroke-width="1"/>
<path d="M360.500 21.500H380V39H360.500ZM360.500 26.500H380M370 26.500V39M364 30h3v2h-3zM364 35h3v2h-3zM373 30h3v2h-3zM373 35h3v2h-3z" stroke-width="1.200"/>
<path d="M392.500 21.500H411V39H392.500ZM392.500 27.500H411M392.500 33H411M398.500 21.500V39M405 21.500V39M398 39l13-11" stroke="#5b5e65" stroke-width="1.200"/>
<path d="M420.500 28l2.500 3 2.500-3" stroke="#53565d" stroke-width="1"/>
<path d="M446 25.500h8M447 30l3 3 3-3" stroke-width="1"/>
<path d="M700 28l5 5 5-5" stroke-width="1.300"/>
</g>
<text x="485.600" y="35" fill="#fff" font-size="14.500" textLength="209" lengthAdjust="spacingAndGlyphs">Call Center... • Saved to this PC</text>
<rect x="753.500" y="10.500" width="459" height="39.500" rx="4" fill="#202022" stroke="#6a6a6a"/>
<g fill="none" stroke="#9a9a9a" stroke-width="1.400"><circle cx="781" cy="27" r="6.500"/><path d="M776.500 32l-5.500 6"/></g>
<text x="805" y="35" fill="#8f8f8f" font-size="16" textLength="50" lengthAdjust="spacingAndGlyphs">Search</text>
<path d="M1672.500 20L1682 39H1663Z" fill="#e8a33d"/><path d="M1672.500 27v6M1672.500 35v1.500" stroke="#3a2a10" stroke-width="1.400"/>
<circle cx="1708" cy="30" r="15" fill="#cfcfcf"/>
<g fill="none" stroke="#777" stroke-width="1.100"><circle cx="1708" cy="25" r="5"/><path d="M1699 41q1-9 9-9t9 9"/></g>
<path d="M1761 29.500H1775" stroke="#fff" stroke-width="1.200"/>
<g fill="none" stroke="#fff" stroke-width="1.200"><rect x="1824" y="26" width="9" height="9" rx="1.500"/><path d="M1827 24h5q3 0 3 3v5"/><path d="M1883 24l11 12M1894 24l-11 12"/></g>
<g>
<text x="25" y="86" class="m" style="font-size:16.500px" textLength="25" lengthAdjust="spacingAndGlyphs">File</text>
<text x="84" y="86" class="m" style="font-size:16.500px" textLength="46" lengthAdjust="spacingAndGlyphs">Home</text>
<text x="153.700" y="86" class="m" style="font-size:16.500px" textLength="43" lengthAdjust="spacingAndGlyphs">Insert</text>
<text x="222" y="86" class="m" style="font-size:16.500px" textLength="39" lengthAdjust="spacingAndGlyphs">Draw</text>
<text x="286" y="86" class="m" style="font-size:16.500px" textLength="93" lengthAdjust="spacingAndGlyphs">Page Layout</text>
<text x="405" y="86" class="m" style="font-size:16.500px" textLength="70" lengthAdjust="spacingAndGlyphs">Formulas</text>
<text x="498.500" y="86" class="m" style="font-size:16.500px" textLength="35" lengthAdjust="spacingAndGlyphs">Data</text>
<text x="560" y="86" class="m" style="font-size:16.500px" textLength="52" lengthAdjust="spacingAndGlyphs">Review</text>
<text x="638" y="86" class="m" style="font-size:16.500px" textLength="36" lengthAdjust="spacingAndGlyphs">View</text>
<text x="698" y="86" class="m" style="font-size:16.500px" textLength="76" lengthAdjust="spacingAndGlyphs">Automate</text>
<text x="799" y="86" class="m" style="font-size:16.500px" textLength="77" lengthAdjust="spacingAndGlyphs">Developer</text>
<text x="900" y="86" class="m" style="font-size:16.500px" textLength="54" lengthAdjust="spacingAndGlyphs">Inquire</text>
<text x="979.500" y="86" class="m" style="font-size:16.500px" textLength="88.600" lengthAdjust="spacingAndGlyphs">Power Pivot</text>
</g>
<rect x="1686" y="64.500" width="117.500" height="29" rx="4" fill="#2a2a2c" stroke="#6a6a6a"/>
<path d="M1692.500 73.500H1706V83.500H1697L1694 87V83.500H1692.500Z" fill="none" stroke="#fff" stroke-width="1.200"/>
<text x="1712.600" y="85" class="m" textLength="82.500" lengthAdjust="spacingAndGlyphs">Comments</text>
<rect x="1814" y="64" width="90" height="30" rx="4" fill="#36a45c"/>
<path d="M1821 75h4l3-3M1821 75v10h10v-7M1825 82q1-6 8-7M1829 71l5 3-3 4" fill="none" stroke="#123d26" stroke-width="1.200"/>
<text x="1840" y="85" fill="#123d26" font-size="16" textLength="42" lengthAdjust="spacingAndGlyphs">Share</text>
<path d="M1892 78l2.500 2.500 2.500-2.500" fill="none" stroke="#123d26" stroke-width="1.200"/>

<!-- right scrollbar -->
<rect x="1892" y="99" width="26" height="894" fill="#14151f"/>
<rect x="1900" y="119" width="11" height="773" rx="5.500" fill="#a5a5a5"/>
<path d="M1905.500 104L1911 114H1900ZM1905.500 951L1900 941H1911Z" fill="#a5a5a5"/>

<!-- bottom bar -->
<rect x="0" y="953" width="1918" height="40" fill="#14151f"/>
<path d="M38 968l-5 6 5 6M72 968l5 6-5 6" fill="none" stroke="#8a8a8a" stroke-width="1.200"/>
<rect x="140" y="958" width="183" height="30" rx="3" fill="#05633f"/>
<text x="152.300" y="979" fill="#c9ecd4" font-size="16" textLength="158.600" lengthAdjust="spacingAndGlyphs">KPI,s &amp; Calls Volume</text>
<path d="M333 953H502V986Q502 988 500 988H335Q333 988 333 986Z" fill="url(#tb)"/>
<text x="344.600" y="975" fill="#222" font-size="17" textLength="146.700" lengthAdjust="spacingAndGlyphs">Agent &amp; Customer</text>
<rect x="344.600" y="982" width="146.400" height="2.500" fill="#3d7a1f"/>
<rect x="512" y="958" width="70.500" height="30" rx="3" fill="#e2eed9"/>
<text x="523.500" y="979" fill="#222" font-size="16" textLength="49" lengthAdjust="spacingAndGlyphs">Tables</text>
<rect x="595" y="958" width="147.500" height="30" rx="3" fill="#fff"/>
<text x="606" y="979" fill="#222" font-size="16" textLength="125" lengthAdjust="spacingAndGlyphs">Fact_Call_Center</text>
<path d="M326.500 960V986M506.500 960V986M589 960V986M748 960V986" stroke="#4a4a4a"/>
<path d="M801 974H815M808 967V981" stroke="#e0e0e0" stroke-width="1.300"/>
<circle cx="1155" cy="966" r="1.200" fill="#ddd"/><circle cx="1155" cy="972" r="1.200" fill="#ddd"/><circle cx="1155" cy="978" r="1.200" fill="#ddd"/>
<rect x="1196.500" y="967" width="674.500" height="11" rx="5.500" fill="#a5a5a5"/>
<path d="M1181 972.500L1190 966V979ZM1890 972.500L1882 966V979Z" fill="#a5a5a5"/>

<!-- watermarks -->
<text x="957" y="948" text-anchor="middle" font-size="84" font-weight="700" fill="#dcdcdc" fill-opacity=".72" stroke="#dcdcdc" stroke-opacity=".6" stroke-width="3" style='font-family:"DejaVu Sans",sans-serif' textLength="214" lengthAdjust="spacingAndGlyphs">نفذلي</text>
<ellipse cx="875" cy="951.500" rx="5" ry="6.500" fill="#c8c8c8"/><ellipse cx="890" cy="951.500" rx="5" ry="6.500" fill="#c8c8c8"/>
<text x="862" y="985" fill="#c8c8c8" stroke="#c8c8c8" stroke-width=".5" font-size="33" textLength="196" lengthAdjust="spacingAndGlyphs">nafezly.com</text>
<text x="1553.800" y="940" fill="#9a9a9a" fill-opacity=".75" font-size="24" textLength="195.600" lengthAdjust="spacingAndGlyphs">Activate Windows</text>
<text x="1553.800" y="966" fill="#b5b5b5" fill-opacity=".8" font-size="17" textLength="284" lengthAdjust="spacingAndGlyphs">Go to Settings to activate Windows.</text>
</svg>
</body></html>
